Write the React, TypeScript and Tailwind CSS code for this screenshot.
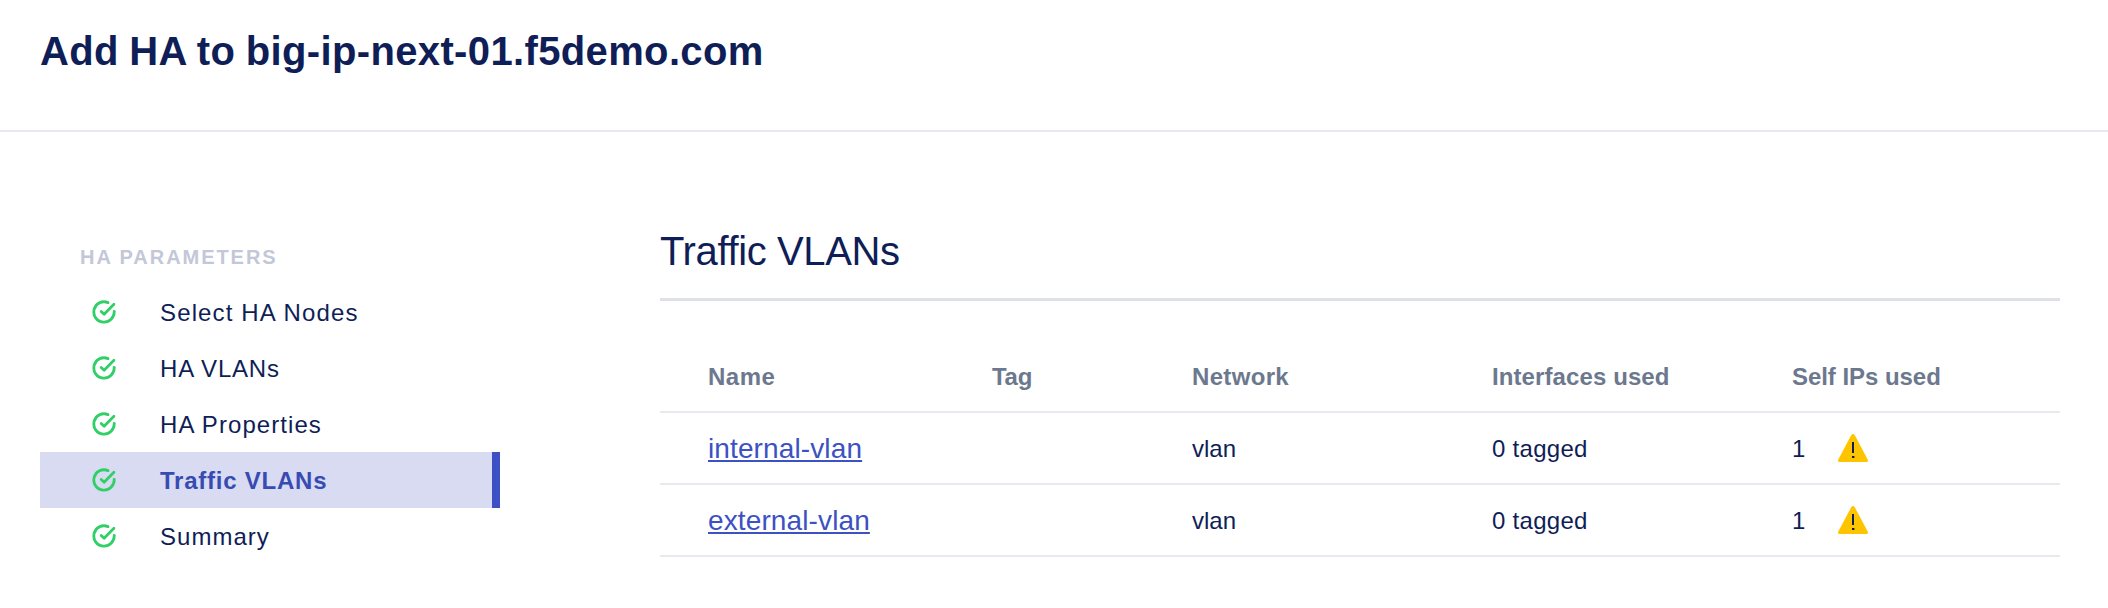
type Step = { label: string; spacing: string; active?: boolean };

const steps: Step[] = [
  { label: "Select HA Nodes", spacing: "tracking-[1.14px]" },
  { label: "HA VLANs", spacing: "tracking-[0.8px]" },
  { label: "HA Properties", spacing: "tracking-[1.06px]" },
  { label: "Traffic VLANs", spacing: "tracking-[0.76px]", active: true },
  { label: "Summary", spacing: "tracking-[1.03px]" },
];

const columns = [
  { label: "Name", spacing: "tracking-[0.5px]" },
  { label: "Tag", spacing: "tracking-[-0.3px]" },
  { label: "Network", spacing: "tracking-[0.33px]" },
  { label: "Interfaces used", spacing: "tracking-[0.1px]" },
  { label: "Self IPs used", spacing: "tracking-[-0.05px]" },
];

const vlans = [
  { name: "internal-vlan", tag: "", network: "vlan", interfaces: "0 tagged", selfIps: 1 },
  { name: "external-vlan", tag: "", network: "vlan", interfaces: "0 tagged", selfIps: 1 },
];

const rowGrid =
  "grid grid-cols-[284px_200px_300px_300px_1fr] items-center border-b-2 border-[#e9e9ef] pl-12";

function CheckIcon() {
  return (
    <svg
      className="size-6 shrink-0"
      viewBox="0 0 24 24"
      fill="none"
      stroke="#30d068"
      strokeWidth="2.8"
      strokeLinecap="round"
      strokeLinejoin="round"
      aria-hidden="true"
    >
      <path d="M16 2.6A10.2 10.2 0 1 0 22.2 11.4" />
      <path d="M9.2 11.5 12.1 14.3 21.9 4.3" />
    </svg>
  );
}

function WarningIcon() {
  return (
    <svg className="h-7 w-[30px]" viewBox="0 0 30 28" aria-hidden="true">
      <path
        d="M13.3 1.1Q15-1 16.7 1.1L29.7 25.6Q30.6 28 28.5 28H1.5Q-.6 28 .3 25.6Z"
        fill="#ffc400"
      />
      <path d="M14 8h2v11h-2zM14 22h2.4v2H14z" fill="#0f1e57" />
    </svg>
  );
}

export default function App() {
  return (
    <div className="h-[608px] w-full bg-white font-['Liberation_Sans',Arial,sans-serif] text-[#0f1e57]">
      <header className="h-[132px] border-b-2 border-[#e6e9f3] px-10 pt-[27px]">
        <h1 className="text-[40px] leading-[48px] font-bold tracking-[0.36px] [word-spacing:-1px]">
          Add HA to big-ip-next-01.f5demo.com
        </h1>
      </header>

      <div className="flex pr-12 pl-10">
        <nav className="w-[460px] shrink-0 pt-[113px]">
          <h2 className="mb-[15px] pl-10 text-[20px] leading-6 font-bold tracking-[1.95px] text-[#c3c7d8]">
            HA PARAMETERS
          </h2>
          <ul>
            {steps.map((step) => (
              <li
                key={step.label}
                className={`flex h-14 items-center gap-11 pl-[52px] text-2xl ${step.spacing} ${
                  step.active
                    ? "border-r-8 border-[#3c51c3] bg-[#d8dbf1] font-bold text-[#374bb3]"
                    : ""
                }`}
              >
                <CheckIcon />
                <span className="pt-0.5">{step.label}</span>
              </li>
            ))}
          </ul>
        </nav>

        <main className="ml-40 flex-1 pt-[95px]">
          <h2 className="h-[74px] border-b-3 border-[#dee2e6] text-[40px] leading-[48px] tracking-[-0.37px]">
            Traffic VLANs
          </h2>
          <div className={`${rowGrid} h-28 pt-[60px] pb-[18px] text-2xl font-bold text-[#6c788e]`}>
            {columns.map((column) => (
              <div key={column.label} className={column.spacing}>
                {column.label}
              </div>
            ))}
          </div>
          {vlans.map((vlan) => (
            <div key={vlan.name} className={`${rowGrid} h-[72px] text-2xl leading-8`}>
              <a
                href="#"
                className="justify-self-start pt-0.5 text-[28px] tracking-[0.12px] text-[#3c51c3] underline decoration-2 underline-offset-2 [text-decoration-skip-ink:none]"
              >
                {vlan.name}
              </a>
              <div className="pt-0.5">{vlan.tag}</div>
              <div className="pt-0.5">{vlan.network}</div>
              <div className="pt-0.5 tracking-[0.28px]">{vlan.interfaces}</div>
              <div className="flex items-center">
                <span className="w-[46px] pt-0.5">{vlan.selfIps}</span>
                <WarningIcon />
              </div>
            </div>
          ))}
        </main>
      </div>
    </div>
  );
}
